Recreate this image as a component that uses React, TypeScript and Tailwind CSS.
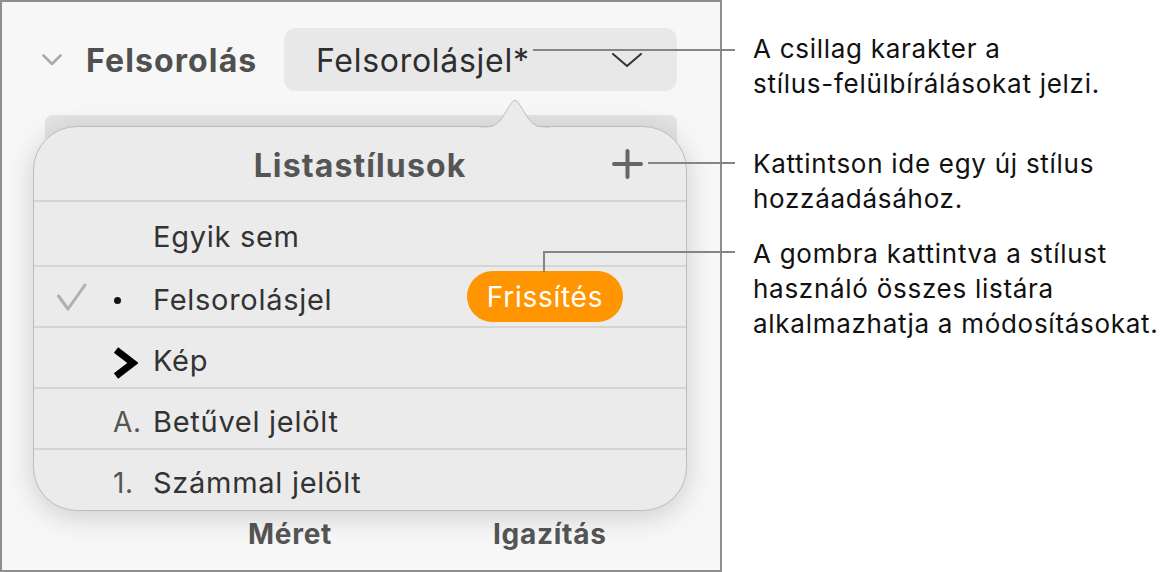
import React from "react";

type Row = {
  label: string;
  checked?: boolean;
  marker: "none" | "bullet" | "image" | "letter" | "number";
  update?: boolean;
  h: string;
  last?: boolean;
};

const rows: Row[] = [
  { label: "Egyik sem", marker: "none", h: "h-[65px]" },
  { label: "Felsorolásjel", marker: "bullet", checked: true, update: true, h: "h-[61px]" },
  { label: "Kép", marker: "image", h: "h-[61px]" },
  { label: "Betűvel jelölt", marker: "letter", h: "h-[61px]" },
  { label: "Számmal jelölt", marker: "number", h: "h-[60px]", last: true },
];

function Marker({ kind }: { kind: Row["marker"] }) {
  if (kind === "bullet")
    return <span className="ml-[1px] mt-[8px] block h-[7px] w-[7px] rounded-full bg-[#111]" />;
  if (kind === "image")
    return (
      <svg width="26" height="32" viewBox="0 0 26 32" className="-ml-[1px] mt-[10px]">
        <polyline points="4,3 21,16 4,29" fill="none" stroke="#000" strokeWidth="7" strokeLinejoin="miter" />
      </svg>
    );
  if (kind === "letter") return <span className="mt-[6px] text-[28px] text-[#555]">A.</span>;
  if (kind === "number") return <span className="mt-[6px] text-[28px] text-[#555]">1.</span>;
  return null;
}

export default function App() {
  return (
    <div className="relative flex h-[572px] w-[1168px] overflow-hidden bg-white font-['Inter','Noto_Sans',sans-serif] tracking-[0.045em]">
      {/* inspector panel */}
      <div className="flex h-[572px] w-[722px] shrink-0 flex-col border-2 border-[#8e8e8e] bg-[#f7f7f7]">
        <div className="mt-[26px] flex h-[63px] items-center pl-[40px] pr-[43px]">
          <svg width="20" height="12" viewBox="0 0 20 12">
            <path d="M1.5 1.5 L10 10 L18.5 1.5" fill="none" stroke="#a9a9a9" strokeWidth="2.5" strokeLinecap="round" strokeLinejoin="round" />
          </svg>
          <span className="ml-[24px] mt-[2px] text-[32px] font-bold tracking-[0.035em] text-[#505050]">Felsorolás</span>
          <div className="ml-auto flex h-[63px] w-[393px] items-center rounded-[12px] bg-[#e8e8e8] pl-[32px] pr-[35px]">
            <span className="mt-[2px] text-[32px] text-[#2e2e2e]">Felsorolásjel*</span>
            <svg width="30" height="14" viewBox="0 0 30 14" className="ml-auto">
              <path d="M1 1 L15 13 L29 1" fill="none" stroke="#333" strokeWidth="2" strokeLinecap="round" strokeLinejoin="round" />
            </svg>
          </div>
        </div>
        <div className="mx-[43px] mt-[24px] h-[60px] rounded-[8px] bg-[#e3e3e3]" />
        <div className="flex-1" />
        <div className="mb-[16px] flex h-[40px] items-center text-[28px] font-bold text-[#555]">
          <span className="ml-[246px]">Méret</span>
          <span className="ml-[161px]">Igazítás</span>
        </div>
      </div>

      {/* callout texts */}
      <div className="flex flex-col pl-[31px] text-[26px] leading-[35px] text-[#111]">
        <p className="mt-[31px]">
          A csillag karakter a<br />stílus-felülbírálásokat jelzi.
        </p>
        <p className="mt-[45px]">
          Kattintson ide egy új stílus
          <br />
          hozzáadásához.
        </p>
        <p className="mt-[20px]">
          A gombra kattintva a stílust
          <br />
          használó összes listára
          <br />
          alkalmazhatja a módosításokat.
        </p>
      </div>

      {/* list styles popover */}
      <div className="absolute left-[33px] top-[126px] flex h-[385px] w-[654px] flex-col rounded-[44px] border border-[#bdbdbd] bg-[#ebebeb] shadow-[0_6px_28px_rgba(0,0,0,0.17)]">
        <svg width="70" height="32" viewBox="0 0 70 32" className="absolute left-[446px] top-[-30px]">
          <path d="M0 31 C12 31 17 29 23 20 L31 7 Q35 1 39 7 L47 20 C53 29 58 31 70 31 Z" fill="#ebebeb" />
          <path d="M0 30.5 C12 30.5 17 28.5 23 19.5 L31 6.5 Q35 0.5 39 6.5 L47 19.5 C53 28.5 58 30.5 70 30.5" fill="none" stroke="#bdbdbd" strokeWidth="1" />
          <rect x="0" y="30.5" width="70" height="2" fill="#ebebeb" />
        </svg>
        <div className="grid h-[75px] grid-cols-[1fr_auto_1fr] items-center border-b-2 border-[#d5d5d5]">
          <span />
          <span className="mt-[4px] text-[32px] font-bold tracking-[0.035em] text-[#555]">Listastílusok</span>
          <svg width="31" height="30" viewBox="0 0 31 30" className="mr-[43px] justify-self-end">
            <path d="M15.5 2 V28 M2 15 H29" stroke="#666" strokeWidth="4" strokeLinecap="round" />
          </svg>
        </div>
        {rows.map((r) => (
          <div
            key={r.label}
            className={`flex ${r.h} items-center pl-[23px] pr-[63px] ${r.last ? "" : "border-b-2 border-[#d5d5d5]"}`}
          >
            <div className="flex w-[56px] items-center">
              {r.checked && (
                <svg width="30" height="28" viewBox="0 0 30 28">
                  <path d="M1.5 13 L11 26 L28 2" fill="none" stroke="#afafaf" strokeWidth="3" strokeLinecap="round" strokeLinejoin="round" />
                </svg>
              )}
            </div>
            <div className="flex w-[40px] items-center">
              <Marker kind={r.marker} />
            </div>
            <span className="mt-[6px] text-[29px] text-[#333]">{r.label}</span>
            {r.update && (
              <span className="ml-auto flex h-[51px] w-[156px] items-center justify-center rounded-full bg-[#ff9500] text-[28px] text-white">
                Frissítés
              </span>
            )}
          </div>
        ))}
      </div>

      {/* leader lines */}
      <div className="absolute left-[533px] top-[49px] h-[2px] w-[202px] bg-[#858585]" />
      <div className="absolute left-[648px] top-[162px] h-[2px] w-[87px] bg-[#858585]" />
      <div className="absolute left-[544px] top-[251px] h-[2px] w-[191px] bg-[#858585]" />
      <div className="absolute left-[543px] top-[251px] h-[21px] w-[2px] bg-[#858585]" />
    </div>
  );
}
